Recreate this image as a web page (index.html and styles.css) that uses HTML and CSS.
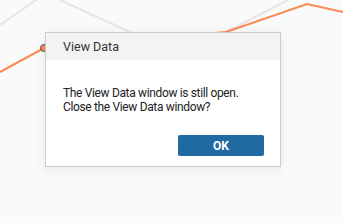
FILE: index.html
```html
<!DOCTYPE html>
<html>
<head>
<meta charset="utf-8">
<link rel="stylesheet" href="styles.css">
</head>
<body>
<div class="stage">
  <svg class="chart" width="343" height="223" viewBox="0 0 343 223">
    <polyline points="0,25 36,0" fill="none" stroke="#e6e6e6" stroke-width="2"/>
    <polyline points="60,0 132,33" fill="none" stroke="#e6e6e6" stroke-width="2"/>
    <polyline points="222,34 288,0" fill="none" stroke="#e6e6e6" stroke-width="2"/>
    <polyline points="0,72 44,48 226,32 307,4 343,12" fill="none" stroke="#fa8a52" stroke-width="2"/>
    <circle cx="44" cy="48" r="3.5" fill="#fa8a52" stroke="#555" stroke-width="1"/>
  </svg>
  <div class="dialog">
    <div class="dialog-header">View Data</div>
    <div class="dialog-body">
      <p class="message">The View Data window is still open.<br>Close the View Data window?</p>
      <div class="actions">
        <button class="btn-ok">OK</button>
      </div>
    </div>
  </div>
</div>
</body>
</html>
```
FILE: styles.css
```css
html, body {
  margin: 0;
  padding: 0;
  background: #fafafa;
}
.stage {
  position: relative;
  width: 343px;
  height: 223px;
  overflow: hidden;
  font-family: "Roboto", "Liberation Sans", sans-serif;
}
.chart {
  position: absolute;
  left: 0;
  top: 0;
}
.dialog {
  position: absolute;
  left: 45px;
  top: 32px;
  width: 234px;
  height: 133px;
  background: #fff;
  border: 1px solid #cbcbcb;
  box-shadow: 0 2px 12px rgba(0,0,0,0.08);
  display: flex;
  flex-direction: column;
}
.dialog-header {
  height: 27px;
  background: #f3f3f3;
  display: flex;
  align-items: center;
  padding-left: 17px;
  font-size: 12.5px;
  color: #333;
}
.dialog-body {
  flex: 1;
  padding: 0 16px 0 17px;
  display: flex;
  flex-direction: column;
}
.message {
  margin: 26px 0 0 0;
  font-size: 12px;
  line-height: 14px;
  letter-spacing: -0.35px;
  color: #222;
}
.actions {
  display: flex;
  justify-content: flex-end;
  margin-top: 21px;
}
.btn-ok {
  width: 86px;
  height: 21px;
  border: none;
  border-radius: 2px;
  background: #1f6aa3;
  color: #fff;
  font-family: inherit;
  font-weight: bold;
  font-size: 12px;
  padding: 0;
}
```
